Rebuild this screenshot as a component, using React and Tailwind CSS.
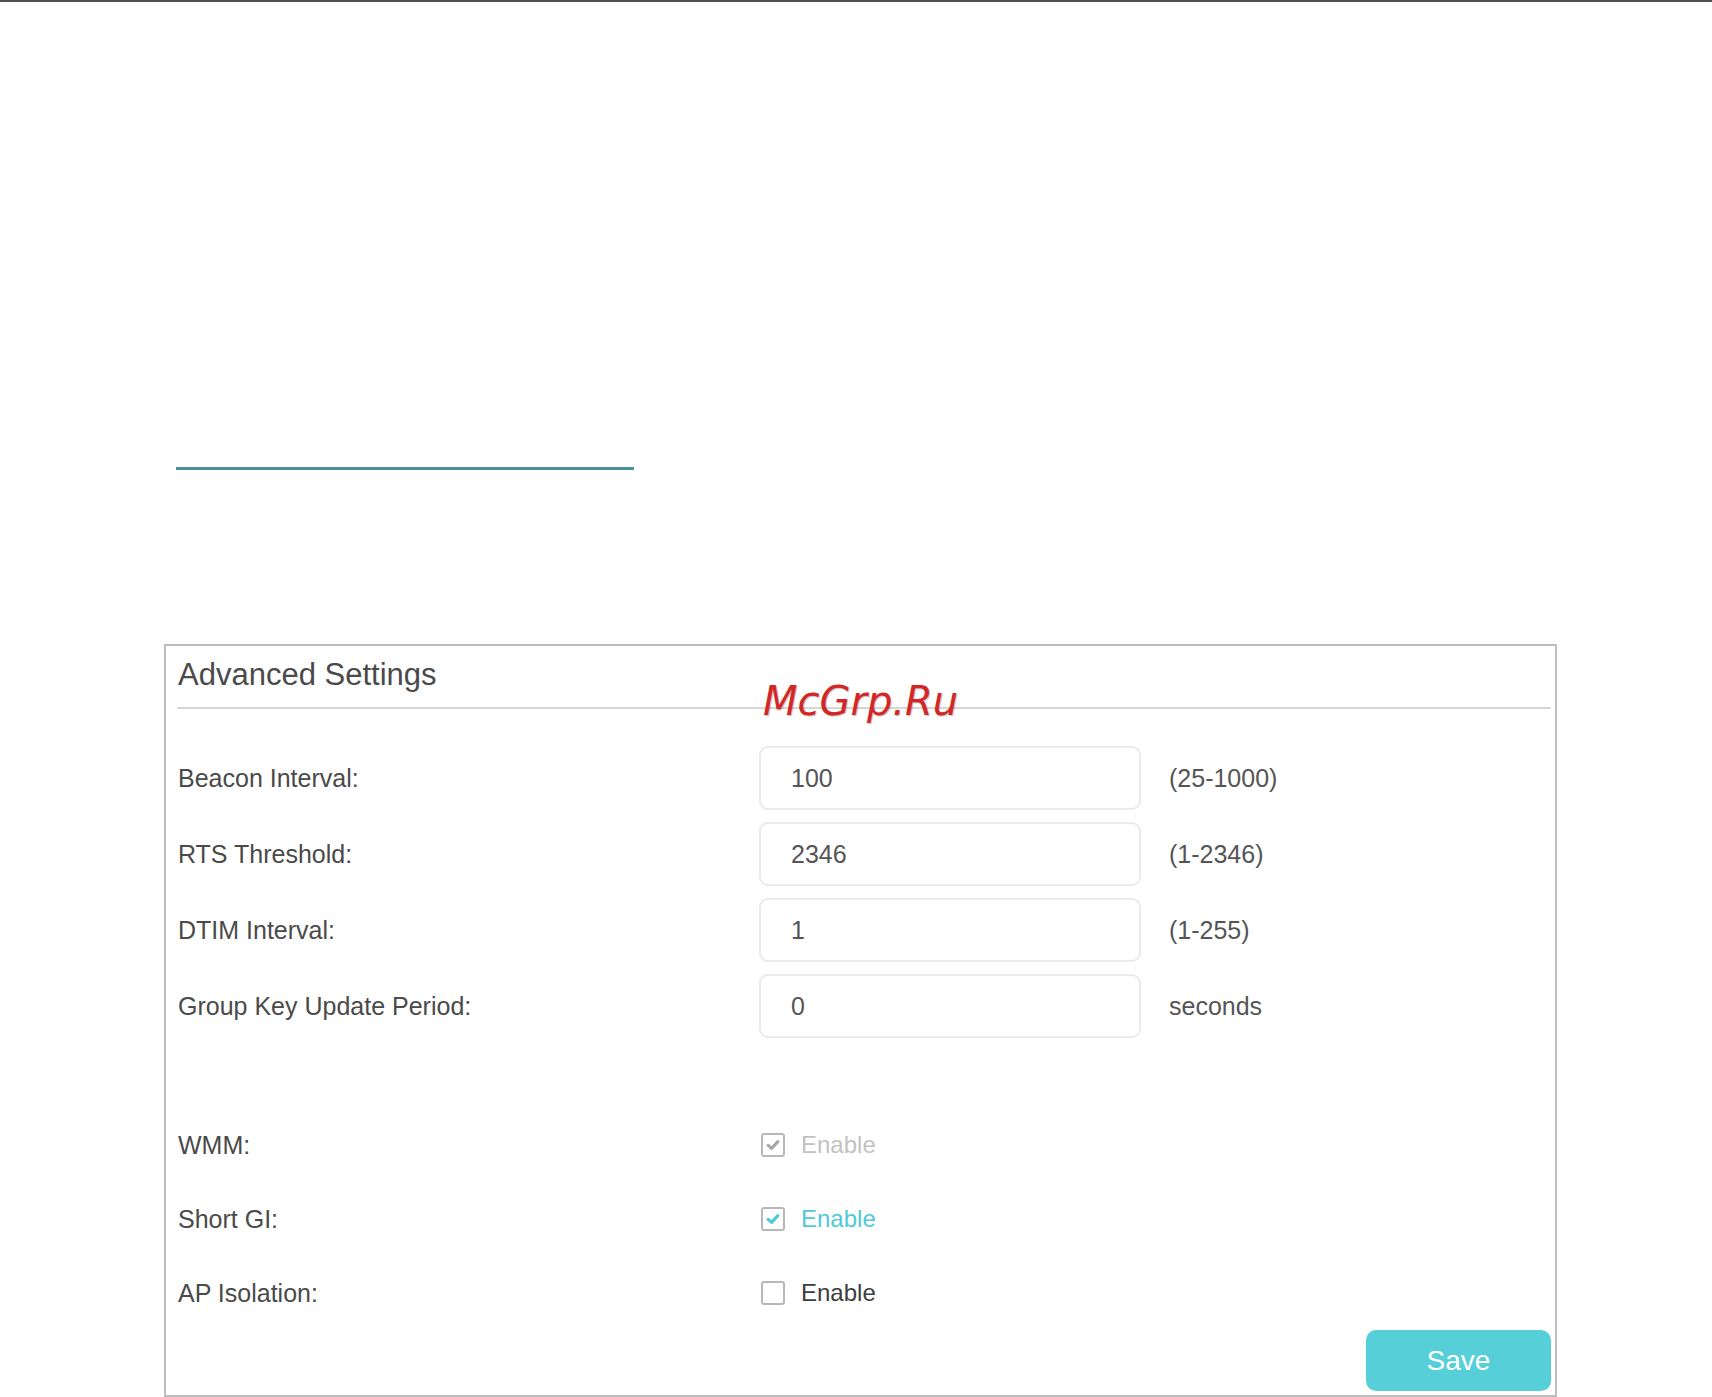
import React from "react";

const font = { fontFamily: '"Liberation Sans", Arial, sans-serif' };

function Check({ color }) {
  return (
    <svg width="14" height="12" viewBox="0 0 14 12" fill="none">
      <path d="M2.2 6.4 L5.6 9.4 L11.8 2.6" stroke={color} strokeWidth="3.2" strokeLinecap="round" strokeLinejoin="round" />
    </svg>
  );
}

function InputRow({ label, value, hint }) {
  return (
    <div className="flex items-center h-[64px]">
      <div className="w-[582px] pl-[1px] text-[25px] leading-[30px] text-[#4a4a4a]">{label}</div>
      <div className="w-[382px] h-[64px] border-2 border-[#ebebeb] rounded-[9px] flex items-center pl-[30px] text-[25px] leading-[30px] text-[#555555]">
        {value}
      </div>
      <div className="ml-[28px] text-[25px] leading-[30px] text-[#555555]">{hint}</div>
    </div>
  );
}

function CheckRow({ label, state }) {
  const textColor = state === "disabled" ? "text-[#c2c2c2]" : state === "on" ? "text-[#4ecad6]" : "text-[#3d3d3d]";
  return (
    <div className="flex items-center h-[74px]">
      <div className="w-[582px] pl-[1px] text-[25px] leading-[30px] text-[#4a4a4a]">{label}</div>
      <div className="ml-[2px] w-[24px] h-[24px] border-2 border-[#b8b8b8] rounded-[3px] flex items-center justify-center bg-white">
        {state === "disabled" && <Check color="#a8a8a8" />}
        {state === "on" && <Check color="#4ecad6" />}
      </div>
      <div className={`ml-[16px] text-[24px] leading-[30px] ${textColor}`}>Enable</div>
    </div>
  );
}

export default function App() {
  return (
    <div className="w-[1712px] h-[1397px] bg-white overflow-hidden" style={font}>
      <div className="h-[2px] w-full bg-[#505050]" />
      <div className="ml-[176px] mt-[465px] w-[458px] h-[3px] bg-[#4a919e]" />
      <div className="relative ml-[164px] mt-[174px] w-[1393px] h-[753px] border-2 border-[#bdbdbd] pt-[11px] pl-[11px] pr-[4px] pb-[3px] flex flex-col">
        <div className="border-b-2 border-[#d6d6d6] pb-[14px]">
          <div className="text-[31px] leading-[36px] text-[#4a4a4a] pl-[1px]">Advanced Settings</div>
        </div>
        <div className="mt-[37px] flex flex-col gap-[12px]">
          <InputRow label="Beacon Interval:" value="100" hint="(25-1000)" />
          <InputRow label="RTS Threshold:" value="2346" hint="(1-2346)" />
          <InputRow label="DTIM Interval:" value="1" hint="(1-255)" />
          <InputRow label="Group Key Update Period:" value="0" hint="seconds" />
        </div>
        <div className="mt-[70px] flex flex-col">
          <CheckRow label="WMM:" state="disabled" />
          <CheckRow label="Short GI:" state="on" />
          <CheckRow label="AP Isolation:" state="off" />
        </div>
        <div className="flex justify-end">
          <button className="w-[185px] h-[61px] rounded-[10px] bg-[#57cfd9] text-white text-[28px] leading-[32px]" style={font}>
            Save
          </button>
        </div>
        <div
          className="absolute left-[597px] top-[35px] text-[40px] leading-[40px] italic text-[#d42626] [text-shadow:1px_1px_1px_rgba(0,0,0,0.25)]"
          style={{ fontFamily: '"DejaVu Sans", sans-serif' }}
        >
          McGrp.Ru
        </div>
      </div>
    </div>
  );
}
